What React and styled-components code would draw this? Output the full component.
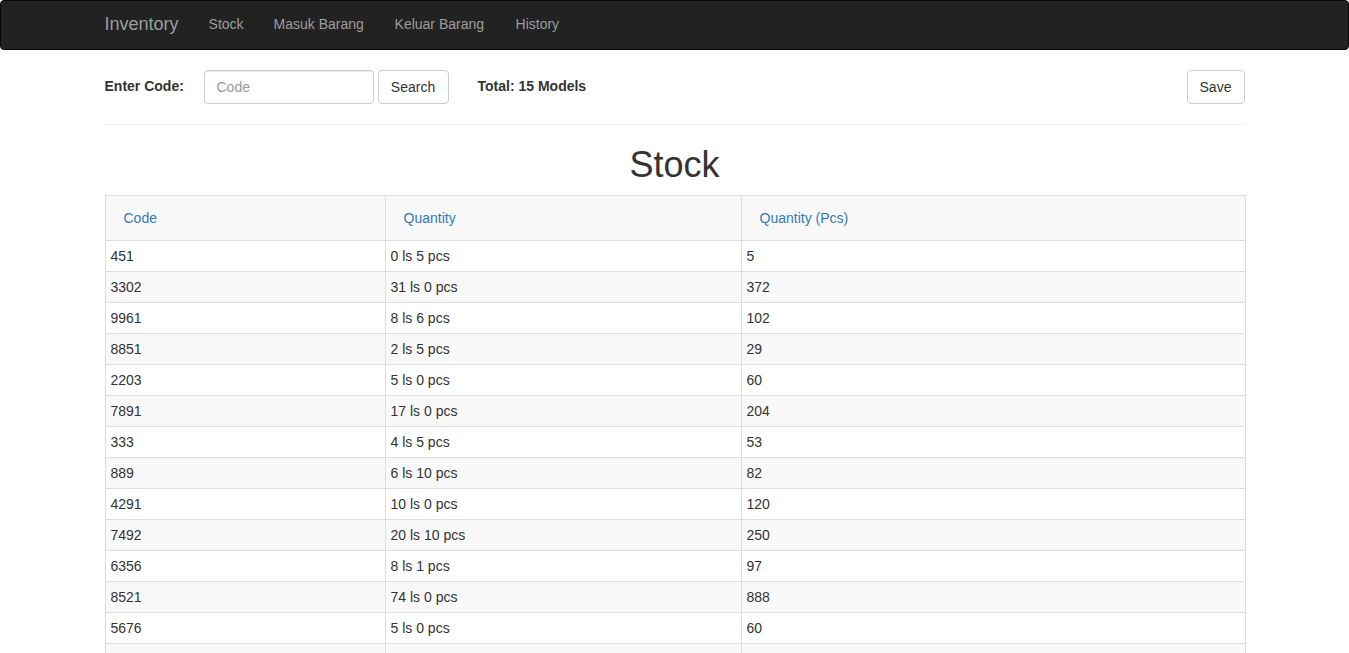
import React from 'react';
import styled, { createGlobalStyle } from 'styled-components';

const GlobalStyle = createGlobalStyle`
  * { box-sizing: border-box; }
  body {
    margin: 0;
    font-family: "Liberation Sans", Arial, sans-serif;
    font-size: 14px;
    line-height: 1.42857;
    color: #333;
    background: #fff;
  }
`;

const Navbar = styled.nav`
  height: 50px;
  background-color: #222;
  border: 1px solid #080808;
  border-radius: 4px;
`;

const Container = styled.div`
  width: 1170px;
  margin: 0 auto;
  padding: 0 15px;
`;

const NavInner = styled(Container)`
  display: flex;
  align-items: center;
  height: 48px;
`;

const Brand = styled.a`
  font-size: 18px;
  line-height: 20px;
  color: #9d9d9d;
  padding: 13px 15px 15px 0;
  text-decoration: none;
`;

const NavLink = styled.a`
  color: #9d9d9d;
  padding: 13px 15px 15px;
  min-width: ${p => p.w}px;
  line-height: 20px;
  text-decoration: none;
`;

const Toolbar = styled.div`
  display: flex;
  align-items: center;
  margin-top: 20px;
  height: 34px;
`;

const Label = styled.label`
  font-weight: bold;
  width: 99px;
`;

const Input = styled.input`
  width: 170px;
  height: 34px;
  padding: 6px 12px;
  font-family: inherit;
  font-size: 14px;
  color: #555;
  border: 1px solid #ccc;
  border-radius: 4px;
  box-shadow: inset 0 1px 1px rgba(0, 0, 0, 0.075);
  &::placeholder { color: #999; }
`;

const Button = styled.button`
  height: 34px;
  padding: 6px 12px;
  min-width: ${p => p.w || 0}px;
  margin-left: ${p => p.gap || 0}px;
  font-family: inherit;
  font-size: 14px;
  color: #333;
  background: #fff;
  border: 1px solid #ccc;
  border-radius: 4px;
`;

const Total = styled.span`
  font-weight: bold;
  margin-left: 29px;
  flex: 1;
`;

const Divider = styled.hr`
  margin: 20px 0;
  border: 0;
  border-top: 1px solid #eee;
`;

const Title = styled.h1`
  font-size: 36px;
  font-weight: 500;
  line-height: 1.1;
  text-align: center;
  margin: 0 0 10px;
`;

const Table = styled.table`
  width: 100%;
  border-collapse: collapse;
  table-layout: fixed;
  margin-bottom: 20px;
`;

const Th = styled.th`
  width: ${p => p.w}px;
  text-align: left;
  font-weight: normal;
  padding: 12px 18px;
  line-height: 20px;
  background: #f9f9f9;
  border: 1px solid #ddd;
  a { color: #337ab7; text-decoration: none; }
`;

const Row = styled.tr`
  &:nth-child(even) { background: #f9f9f9; }
`;

const Td = styled.td`
  padding: 5px;
  line-height: 20px;
  border: 1px solid #ddd;
`;

const rows = [
  ['451', '0 ls 5 pcs', '5'],
  ['3302', '31 ls 0 pcs', '372'],
  ['9961', '8 ls 6 pcs', '102'],
  ['8851', '2 ls 5 pcs', '29'],
  ['2203', '5 ls 0 pcs', '60'],
  ['7891', '17 ls 0 pcs', '204'],
  ['333', '4 ls 5 pcs', '53'],
  ['889', '6 ls 10 pcs', '82'],
  ['4291', '10 ls 0 pcs', '120'],
  ['7492', '20 ls 10 pcs', '250'],
  ['6356', '8 ls 1 pcs', '97'],
  ['8521', '74 ls 0 pcs', '888'],
  ['5676', '5 ls 0 pcs', '60'],
  ['1024', '3 ls 2 pcs', '38'],
  ['7788', '12 ls 0 pcs', '144'],
];

const App = () => (
  <>
    <GlobalStyle />
    <Navbar>
      <NavInner>
        <Brand href="#">Inventory</Brand>
        <NavLink href="#" w={65}>Stock</NavLink>
        <NavLink href="#" w={121}>Masuk Barang</NavLink>
        <NavLink href="#" w={121}>Keluar Barang</NavLink>
        <NavLink href="#">History</NavLink>
      </NavInner>
    </Navbar>
    <Container>
      <Toolbar>
        <Label>Enter Code:</Label>
        <Input placeholder="Code" />
        <Button gap={4} w={71}>Search</Button>
        <Total>Total: 15 Models</Total>
        <Button w={58}>Save</Button>
      </Toolbar>
      <Divider />
      <Title>Stock</Title>
      <Table>
        <thead>
          <tr>
            <Th w={280}><a href="#">Code</a></Th>
            <Th w={356}><a href="#">Quantity</a></Th>
            <Th w={504}><a href="#">Quantity (Pcs)</a></Th>
          </tr>
        </thead>
        <tbody>
          {rows.map(r => (
            <Row key={r[0]}>
              <Td>{r[0]}</Td>
              <Td>{r[1]}</Td>
              <Td>{r[2]}</Td>
            </Row>
          ))}
        </tbody>
      </Table>
    </Container>
  </>
);

export default App;
